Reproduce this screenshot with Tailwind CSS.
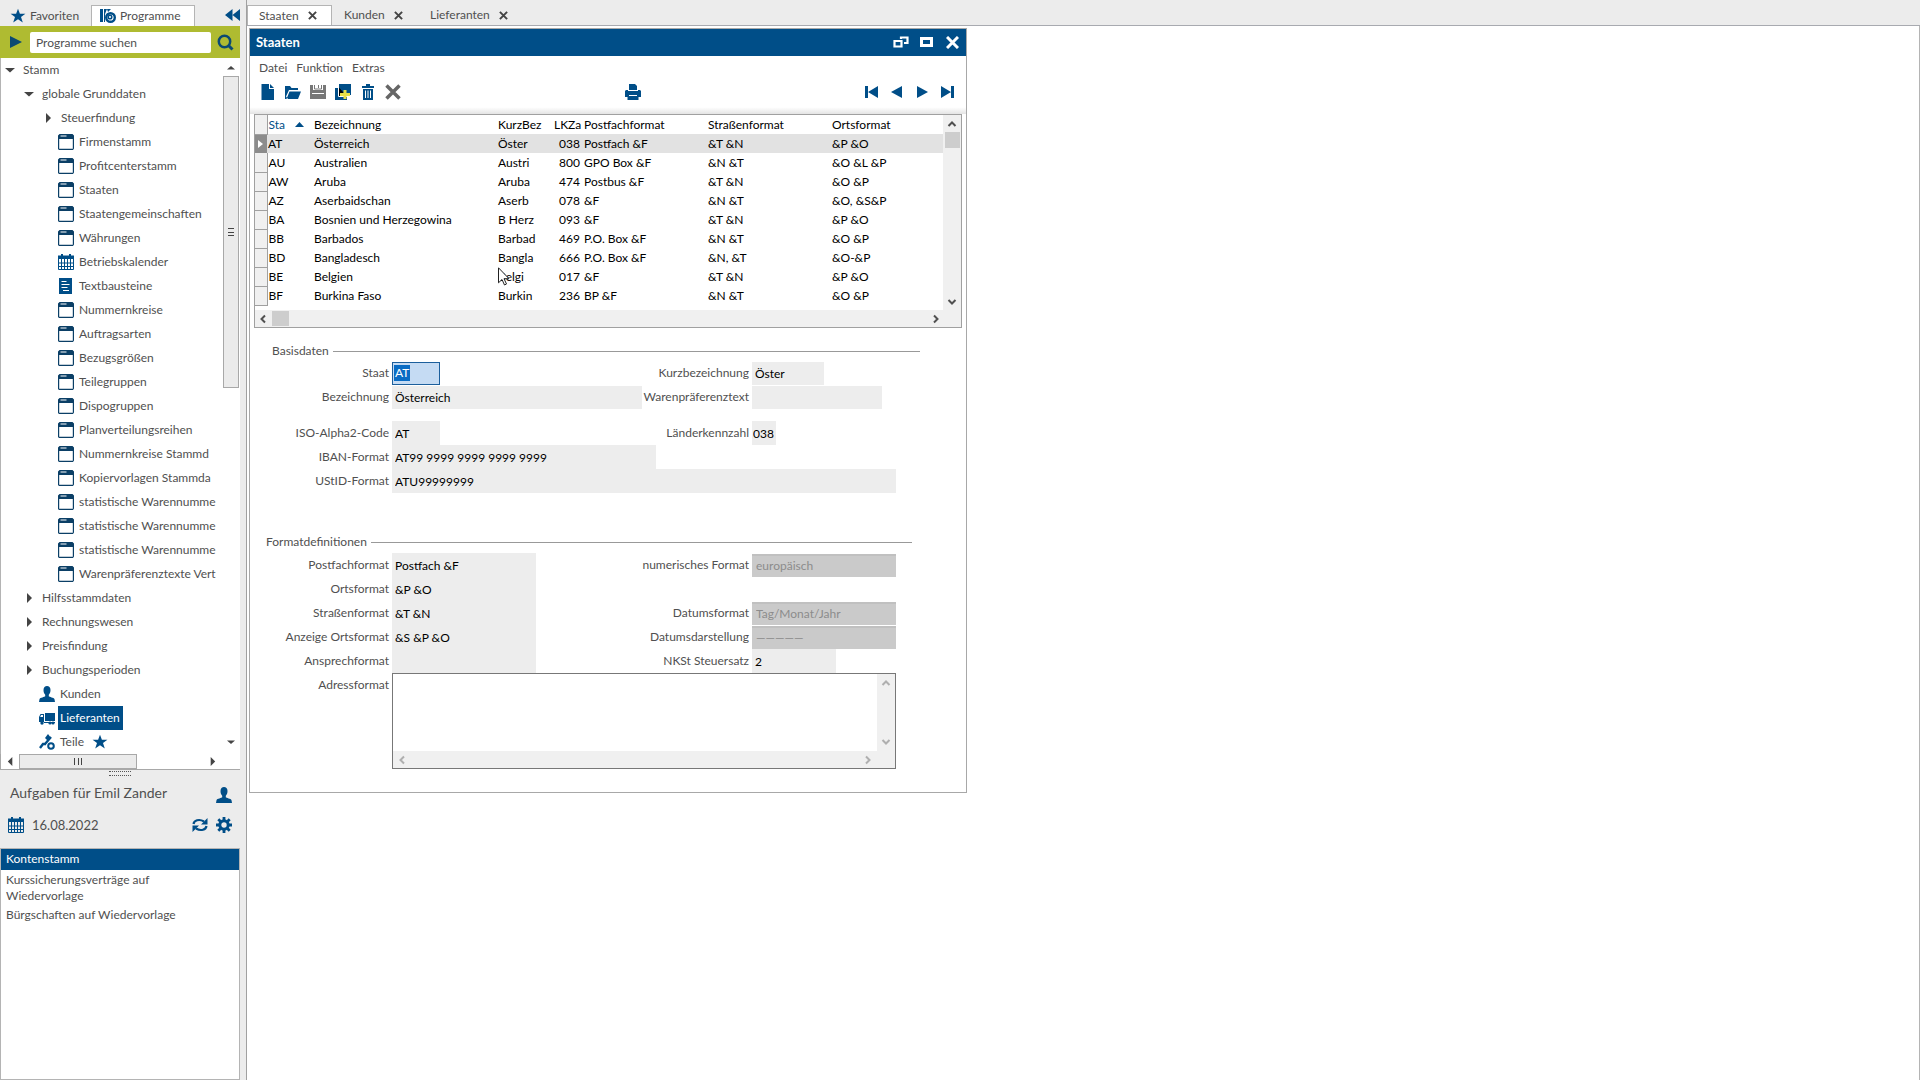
<!DOCTYPE html>
<html lang="de">
<head>
<meta charset="utf-8">
<title>Staaten</title>
<script src="https://cdn.jsdelivr.net/npm/@tailwindcss/browser@4"></script>
</head>
<body class="flex h-screen overflow-hidden bg-[#ececec] font-['Lato','Noto_Sans',sans-serif] text-[12px] leading-4 text-[#505050]">

<svg class="hidden" aria-hidden="true">
  <symbol id="star" viewBox="0 0 16 16"><path fill="#004e88" d="M8 .8l1.9 5h5.5l-4.4 3.2 1.8 5.6L8 11.2l-4.8 3.4L5 9 .6 5.8h5.5z"/></symbol>
  <symbol id="win" viewBox="0 0 16 16"><path fill="#0b3f66" fill-rule="evenodd" d="M1.500 0h13L16 1.500V14.500L15 16H1L0 15V1.500zM1.200 5v9.800h13.600V5zM2.500 1.500v1h6v-1z"/></symbol>
  <symbol id="cal" viewBox="0 0 16 16"><path fill="#004e88" d="M3 0h2v1.500h6V0h2v1.500h3v3.500H0V1.500h3z"/><path fill="none" stroke="#004e88" d="M.5 4v11.500h15V4M3.500 5v10M6.500 5v10M9.500 5v10M12.500 5v10M0 9h16M0 12.500h16"/></symbol>
  <symbol id="doc" viewBox="0 0 16 16"><path fill="#004e88" d="M1 0h13v16H1z"/><path stroke="#fff" d="M3.500 3.500h5M3.500 6.500h8M3.500 9.500h6M5 12.500h6"/></symbol>
  <symbol id="user" viewBox="0 0 16 16"><path fill="#004e88" d="M4.500 4C4.500 1.400 6 0 8 0s3.500 1.400 3.500 4c0 2.200-.6 3.700-1.700 4.700v1.500c.5 1 5 1 5.700 3L16 16H0l.5-2.800c.7-2 5.200-2 5.700-3V8.700C5.100 7.700 4.500 6.200 4.500 4z"/></symbol>
  <symbol id="truck" viewBox="0 0 16 16"><path fill="#004e88" d="M6 3h10v8H6zM0 7l1.500-3H5v8H0zM5 12h11v1H5z"/><path fill="#fff" d="M1.200 7l.8-2h2v2z"/><circle cx="3" cy="13" r="1.700" fill="#004e88"/><circle cx="11" cy="13" r="1.600" fill="#004e88"/><circle cx="14" cy="13" r="1.600" fill="#004e88"/></symbol>
  <symbol id="part" viewBox="0 0 16 16"><path fill="none" stroke="#004e88" stroke-width="2.400" d="M1 14l3-4h3M6 10l6-7"/><path fill="#004e88" d="M6 4l3-4 3 4-3 3z"/><circle cx="12" cy="12" r="2.800" fill="#fff" stroke="#004e88" stroke-width="2"/></symbol>
  <symbol id="down" viewBox="0 0 10 10"><path fill="#444" d="M0 3h10L5 7.500z"/></symbol>
  <symbol id="up" viewBox="0 0 10 10"><path fill="#444" d="M0 7h10L5 2.500z"/></symbol>
  <symbol id="right" viewBox="0 0 10 10"><path fill="#444" d="M3 0v10l5-5z"/></symbol>
  <symbol id="left" viewBox="0 0 10 10"><path fill="#444" d="M7 0v10L2 5z"/></symbol>
  <symbol id="close" viewBox="0 0 10 10"><path stroke="#444" stroke-width="2.200" d="M1 1l8 8M9 1L1 9"/></symbol>
  <symbol id="chev" viewBox="0 0 10 10"><path fill="none" stroke="#505050" stroke-width="2" d="M1.500 7L5 3.500 8.500 7"/></symbol>
</svg>

<aside class="flex w-60 shrink-0 flex-col">
  <nav class="flex h-[26px] items-end">
    <button class="flex h-[21px] w-[91px] items-center gap-1 pl-[10px]"><svg class="size-4"><use href="#star"/></svg>Favoriten</button>
    <button class="flex h-[21px] w-[104px] items-center gap-1 border border-b-0 border-[#b4b4b4] bg-white pl-2">
      <svg class="size-4" viewBox="0 0 16 16"><path fill="#004e88" d="M0 1h3v13H0zM4 1h3l-2 5v8H4zM7 1h4L8 4z"/><circle cx="10.500" cy="9.500" r="4.300" fill="#fff" stroke="#004e88" stroke-width="2.400"/><circle cx="10" cy="9" r="1.800" fill="none" stroke="#004e88" stroke-width="1.500"/></svg>Programme</button>
    <button class="ml-auto h-[22px]" aria-label="Einklappen"><svg class="h-3 w-[15px]" viewBox="0 0 15 12"><path fill="#004e88" d="M7.500 0v12L0 6zM15 0v12L7.500 6z"/></svg></button>
  </nav>
  <form class="flex h-8 items-center bg-[#afbb31]">
    <button type="button" class="w-[30px] pl-[10px]" aria-label="Start"><svg class="h-3 w-3" viewBox="0 0 12 12"><path fill="#0b4a72" d="M0 0v12l12-6z"/></svg></button>
    <input aria-label="Programme suchen" value="Programme suchen" class="h-[21px] min-w-0 flex-1 rounded-[2px] bg-white px-[6px]">
    <button type="button" class="w-[29px] pl-[6px]" aria-label="Suchen"><svg class="size-[17px]" viewBox="0 0 17 17"><circle cx="7.500" cy="7.500" r="5.700" fill="none" stroke="#0b4a72" stroke-width="2.500"/><path stroke="#0b4a72" stroke-width="3" d="M11.500 11.500l4 4"/></svg></button>
  </form>
  <div class="flex border-l border-[#b4b4b4] bg-white">
    <ul class="min-w-0 flex-1 overflow-hidden whitespace-nowrap *:flex *:h-6 *:items-center">
      <li class="gap-2 pl-1"><svg class="size-[10px]"><use href="#down"/></svg>Stamm</li>
      <li class="gap-2 pl-[23px]"><svg class="size-[10px]"><use href="#down"/></svg>globale Grunddaten</li>
      <li class="gap-2 pl-[42px]"><svg class="size-[10px]"><use href="#right"/></svg>Steuerfindung</li>
      <li class="gap-[5px] pl-[57px]"><svg class="size-4"><use href="#win"/></svg>Firmenstamm</li>
      <li class="gap-[5px] pl-[57px]"><svg class="size-4"><use href="#win"/></svg>Profitcenterstamm</li>
      <li class="gap-[5px] pl-[57px]"><svg class="size-4"><use href="#win"/></svg>Staaten</li>
      <li class="gap-[5px] pl-[57px]"><svg class="size-4"><use href="#win"/></svg>Staatengemeinschaften</li>
      <li class="gap-[5px] pl-[57px]"><svg class="size-4"><use href="#win"/></svg>Währungen</li>
      <li class="gap-[5px] pl-[57px]"><svg class="size-4"><use href="#cal"/></svg>Betriebskalender</li>
      <li class="gap-[5px] pl-[57px]"><svg class="size-4"><use href="#doc"/></svg>Textbausteine</li>
      <li class="gap-[5px] pl-[57px]"><svg class="size-4"><use href="#win"/></svg>Nummernkreise</li>
      <li class="gap-[5px] pl-[57px]"><svg class="size-4"><use href="#win"/></svg>Auftragsarten</li>
      <li class="gap-[5px] pl-[57px]"><svg class="size-4"><use href="#win"/></svg>Bezugsgrößen</li>
      <li class="gap-[5px] pl-[57px]"><svg class="size-4"><use href="#win"/></svg>Teilegruppen</li>
      <li class="gap-[5px] pl-[57px]"><svg class="size-4"><use href="#win"/></svg>Dispogruppen</li>
      <li class="gap-[5px] pl-[57px]"><svg class="size-4"><use href="#win"/></svg>Planverteilungsreihen</li>
      <li class="gap-[5px] pl-[57px]"><svg class="size-4 shrink-0"><use href="#win"/></svg>Nummernkreise Stammd</li>
      <li class="gap-[5px] pl-[57px]"><svg class="size-4 shrink-0"><use href="#win"/></svg>Kopiervorlagen Stammda</li>
      <li class="gap-[5px] pl-[57px]"><svg class="size-4 shrink-0"><use href="#win"/></svg>statistische Warennumme</li>
      <li class="gap-[5px] pl-[57px]"><svg class="size-4 shrink-0"><use href="#win"/></svg>statistische Warennumme</li>
      <li class="gap-[5px] pl-[57px]"><svg class="size-4 shrink-0"><use href="#win"/></svg>statistische Warennumme</li>
      <li class="gap-[5px] pl-[57px]"><svg class="size-4 shrink-0"><use href="#win"/></svg>Warenpräferenztexte Vert</li>
      <li class="gap-2 pl-[23px]"><svg class="size-[10px]"><use href="#right"/></svg>Hilfsstammdaten</li>
      <li class="gap-2 pl-[23px]"><svg class="size-[10px]"><use href="#right"/></svg>Rechnungswesen</li>
      <li class="gap-2 pl-[23px]"><svg class="size-[10px]"><use href="#right"/></svg>Preisfindung</li>
      <li class="gap-2 pl-[23px]"><svg class="size-[10px]"><use href="#right"/></svg>Buchungsperioden</li>
      <li class="gap-[5px] pl-[38px]"><svg class="size-4"><use href="#user"/></svg>Kunden</li>
      <li class="gap-[3px] pl-[38px]"><svg class="size-4"><use href="#truck"/></svg><span class="flex h-6 items-center bg-[#004e88] pr-[3px] pl-[2px] text-white">Lieferanten</span></li>
      <li class="gap-[5px] pl-[38px]"><svg class="size-4"><use href="#part"/></svg>Teile<svg class="ml-[3px] size-4"><use href="#star"/></svg></li>
    </ul>
    <div class="flex w-[18px] flex-col items-center pt-[6px]">
      <svg class="size-2"><use href="#up"/></svg>
      <div class="mt-1 flex h-[312px] w-4 items-center justify-center border border-[#a8a8a8] bg-[#ebebeb]"><span class="flex h-2 w-[6px] flex-col justify-between *:h-px *:bg-[#444]"><i></i><i></i><i></i></span></div>
      <svg class="mt-auto mb-2 size-2"><use href="#down"/></svg>
    </div>
  </div>
  <div class="flex h-4 items-center border-b border-l border-[#a8a8a8] bg-white pl-[5px]">
    <svg class="size-[9px]"><use href="#left"/></svg>
    <div class="ml-1 flex h-[15px] w-[118px] items-center justify-center border border-[#a8a8a8] bg-[#ebebeb]"><span class="flex h-[7px] w-2 justify-between *:w-px *:bg-[#444]"><i></i><i></i><i></i></span></div>
    <svg class="mr-[23px] ml-auto size-[9px]"><use href="#right"/></svg>
  </div>
  <div class="h-[7px] pt-px"><div class="mx-auto h-[5px] w-[22px] border-y border-dotted border-[#555]"></div></div>
  <section class="flex h-[71px] flex-col gap-[14px] pr-2 pl-2">
    <div class="flex items-center justify-between pt-[6px] pl-[2px] text-[14px]"><h2>Aufgaben für Emil Zander</h2><button aria-label="Benutzer"><svg class="mt-1 size-4"><use href="#user"/></svg></button></div>
    <div class="flex items-center text-[13px]"><svg class="mr-2 size-4"><use href="#cal"/></svg>16.08.2022
      <button class="ml-auto" aria-label="Aktualisieren"><svg class="size-4" viewBox="0 0 16 16"><path fill="none" stroke="#004e88" stroke-width="2.200" d="M1.500 7C2 3.500 7 1.500 12 4.500M14.500 9C14 12.500 9 14.500 4 11.500"/><path fill="#004e88" d="M15.500 1v6.500H9zM.5 15V8.500H7z"/></svg></button>
      <button class="ml-2" aria-label="Einstellungen"><svg class="size-4" viewBox="0 0 16 16"><circle cx="8" cy="8" r="4.200" fill="none" stroke="#004e88" stroke-width="3"/><path stroke="#004e88" stroke-width="2.800" d="M8 0v3M8 13v3M0 8h3M13 8h3M2.300 2.300l2.200 2.200M11.500 11.500l2.200 2.200M2.300 13.700l2.200-2.200M11.500 4.500l2.200-2.200"/></svg></button>
    </div>
  </section>
  <ul class="flex-1 border border-[#b4b4b4] bg-white">
    <li class="bg-[#004e88] px-[5px] pt-[2px] pb-[3px] text-white">Kontenstamm</li>
    <li class="w-[180px] px-[5px] pt-[2px]">Kurssicherungsverträge auf Wiedervorlage</li>
    <li class="px-[5px] pt-[3px]">Bürgschaften auf Wiedervorlage</li>
  </ul>
</aside>

<div class="w-[7px] shrink-0 border-r border-[#a0a0a0]"></div>

<main class="flex min-w-0 flex-1 flex-col">
  <nav class="flex h-[26px] items-end border-b border-[#a8aab0]">
    <div class="flex h-5 w-[85px] items-center gap-[9px] border border-b-0 border-[#b4b4b4] bg-white pl-[11px]"><a href="#">Staaten</a><button aria-label="Staaten schließen"><svg class="block size-[9px]"><use href="#close"/></svg></button></div>
    <div class="flex h-5 w-[86px] items-center gap-[9px] pl-3"><a href="#">Kunden</a><button aria-label="Kunden schließen"><svg class="block size-[9px]"><use href="#close"/></svg></button></div>
    <div class="flex h-5 items-center gap-[9px] pl-3"><a href="#">Lieferanten</a><button aria-label="Lieferanten schließen"><svg class="block size-[9px]"><use href="#close"/></svg></button></div>
  </nav>
  <div class="relative min-h-0 flex-1 border-r border-[#b4b4b4] bg-white pt-[2px] pl-[2px]">
    <section class="w-[718px] max-w-full border border-[#a8a8a8] bg-white pb-[23px]">
      <header class="flex h-[27px] items-center bg-[#004e88] pr-[7px] pb-px pl-[6px] text-white">
        <h1 class="text-[13px] font-bold">Staaten</h1>
        <button class="ml-auto" aria-label="Wiederherstellen"><svg class="h-3 w-4" viewBox="0 0 16 12"><path fill="none" stroke="#fff" stroke-width="2.200" d="M1.500 5h7v5.500h-7zM8 3V1.500h6.500V7H11"/></svg></button>
        <button class="ml-[11px]" aria-label="Maximieren"><svg class="h-3 w-[13px]" viewBox="0 0 13 12"><path fill="none" stroke="#fff" stroke-width="3" d="M1.500 2.500h10v7h-10z"/></svg></button>
        <button class="ml-[13px]" aria-label="Schließen"><svg class="size-[13px]" viewBox="0 0 13 13"><path stroke="#fff" stroke-width="3" d="M1 1l11 11M12 1L1 12"/></svg></button>
      </header>
      <nav class="flex h-6 items-center gap-[9px] pl-[9px]"><button>Datei</button><button>Funktion</button><button>Extras</button></nav>
      <div class="flex h-[34px] items-start gap-[9px] bg-linear-to-b from-white from-80% to-[#e4e4e4] pt-1 pr-[11px] pl-[10px]">
        <button aria-label="Neu"><svg class="size-4" viewBox="0 0 16 16"><path fill="#004e88" d="M1.500 0H9v5h5v11H1.500zM10 0l4 4h-4z"/></svg></button>
        <button aria-label="Öffnen"><svg class="size-4" viewBox="0 0 16 16"><path fill="#004e88" d="M0 2h5l1.500 2H13v2H4l-3 6.500L3 15h10l3-7.500H4.500L1.500 15H0z"/></svg></button>
        <button aria-label="Speichern"><svg class="size-4" viewBox="0 0 16 16"><path fill="#777" d="M0 1h3v5h10V1h3v14H0z"/><path fill="none" stroke="#777" d="M4.500 1v4h7V1M8.500 1v3"/><path stroke="#fff" d="M2 9.500h12"/></svg></button>
        <button aria-label="Kopieren"><svg class="size-4" viewBox="0 0 16 16"><path fill="#004e88" d="M4 0h12v11H4zM0 4h3v8h9v4H0z"/><path stroke="#fff" d="M3.500 3v9.500H12"/><path fill="#e6e04a" d="M8.500 6h3v3H15v3h-3.500v3h-3v-3H5V9h3.500z"/></svg></button>
        <button aria-label="Löschen"><svg class="size-4" viewBox="0 0 16 16"><path fill="#004e88" d="M2 2h4V0h4v2h4v2H2zM3 5h10v11H3z"/><path stroke="#fff" d="M5.500 6.500V14M8 6.500V14M10.500 6.500V14"/></svg></button>
        <button aria-label="Abbrechen"><svg class="size-4" viewBox="0 0 16 16"><path stroke="#666" stroke-width="3.500" d="M1.500 1.500l13 13M14.500 1.500l-13 13"/></svg></button>
        <button class="mx-auto" aria-label="Drucken"><svg class="size-4" viewBox="0 0 16 16"><path fill="#004e88" d="M4 0h6l2 2v4H4zM1 6h14l1 1v6h-2.500v3h-11v-3H0V7z"/><path stroke="#fff" d="M3 6.500h10M4 11.500h8"/></svg></button>
        <button aria-label="Erster"><svg class="size-4" viewBox="0 0 16 16"><path fill="#004e88" d="M1 2h3v12H1zM14 2v12L4 8z"/></svg></button>
        <button aria-label="Vorheriger"><svg class="size-4" viewBox="0 0 16 16"><path fill="#004e88" d="M13 2v12L2 8z"/></svg></button>
        <button aria-label="Nächster"><svg class="size-4" viewBox="0 0 16 16"><path fill="#004e88" d="M3 2v12l11-6z"/></svg></button>
        <button aria-label="Letzter"><svg class="size-4" viewBox="0 0 16 16"><path fill="#004e88" d="M12 2h3v12h-3zM2 2v12l10-6z"/></svg></button>
      </div>

      <div class="relative mr-1 ml-1 border border-[#a0a0a0] text-black">
        <div class="flex h-[195px] items-start">
          <table class="w-full table-fixed border-collapse text-left whitespace-nowrap [&_td]:p-0 [&_th]:p-0 [&_th]:font-normal [&_tr]:h-[19px]">
            <colgroup><col class="w-[12px]"><col class="w-[47px]"><col class="w-[184px]"><col class="w-[56px]"><col class="w-[26px]"><col class="w-[4px]"><col class="w-[124px]"><col class="w-[124px]"><col></colgroup>
            <thead><tr><th class="border-r border-b border-[#a0a0a0] bg-[#f0f0f0]"></th><th class="text-[#004e88]"><div class="flex items-center gap-[10px] pl-px">Sta<svg class="h-[5px] w-[9px]" viewBox="0 0 9 5"><path fill="#004e88" d="M0 5h9L4.500 0z"/></svg></div></th><th>Bezeichnung</th><th>KurzBez</th><th>LKZa</th><th></th><th>Postfachformat</th><th>Straßenformat</th><th>Ortsformat</th></tr></thead>
            <tbody id="rows"></tbody>
          </table>
          <div class="flex w-[18px] shrink-0 flex-col items-center self-stretch bg-[#f0f0f0] pt-1"><svg class="size-[10px]"><use href="#chev"/></svg><div class="mt-[3px] h-4 w-[15px] bg-[#cdcdcd]"></div><svg class="mt-auto mb-[3px] size-[10px] rotate-180"><use href="#chev"/></svg></div>
        </div>
        <div class="flex h-[17px] items-center bg-[#f0f0f0] pr-5 pl-[3px]"><svg class="size-[10px] -rotate-90"><use href="#chev"/></svg><div class="ml-1 h-[15px] w-[17px] bg-[#cdcdcd]"></div><svg class="ml-auto size-[10px] rotate-90"><use href="#chev"/></svg></div>
        <svg class="absolute top-[152px] left-[243px] h-[19px] w-3" viewBox="0 0 12 19"><path fill="#fff" stroke="#222" d="M.5.800v15l3.500-3.300 2.500 5.500 2-1-2.500-5.300h5z"/></svg>
      </div>

      <form class="pr-[46px] pl-[6px] text-black [&_label]:text-right [&_label]:whitespace-nowrap [&_label]:text-[#505050]">
        <fieldset class="pt-[15px]">
          <div class="flex h-4 items-center gap-1 pl-4 text-[#505050]"><legend>Basisdaten</legend><span class="h-px flex-1 bg-[#999]"></span></div>
          <div class="mt-[2px] grid auto-rows-[24px] grid-cols-[133px_246px_108px_1fr] items-center gap-x-[3px] [&_input]:h-[23px] [&_input]:bg-[#ededed] [&_input]:px-[3px]">
            <label for="st">Staat</label>
            <div class="relative h-[23px] w-12"><input id="st" class="w-12 border border-[#1c5f9c] bg-[#c5dbf3]! px-[2px]! text-white" value="AT"><span class="absolute top-[3px] left-[2px] h-4 bg-[#0a6cc4] px-px text-white">AT</span></div>
            <label for="kb">Kurzbezeichnung</label><input id="kb" class="w-[72px]" value="Öster">
            <label for="bz">Bezeichnung</label><input id="bz" class="w-[250px]" value="Österreich">
            <label for="wp">Warenpräferenztext</label><input id="wp" class="w-[130px]">
          </div>
          <div class="mt-3 grid auto-rows-[24px] grid-cols-[133px_246px_108px_1fr] items-center gap-x-[3px] [&_input]:h-6 [&_input]:bg-[#ededed] [&_input]:px-[3px]">
            <label for="iso">ISO-Alpha2-Code</label><input id="iso" class="w-12" value="AT">
            <label for="lk">Länderkennzahl</label><input id="lk" class="w-6 px-px!" value="038">
            <label for="ib">IBAN-Format</label><input id="ib" class="col-span-3 w-[264px]" value="AT99 9999 9999 9999 9999">
            <label for="us">UStID-Format</label><input id="us" class="col-span-3 w-[504px]" value="ATU99999999">
          </div>
        </fieldset>
        <fieldset class="pt-[41px]">
          <div class="mr-2 flex h-4 items-center gap-1 pl-[10px] text-[#505050]"><legend>Formatdefinitionen</legend><span class="h-px flex-1 bg-[#999]"></span></div>
          <div class="mt-[3px] grid auto-rows-[24px] grid-cols-[133px_246px_108px_1fr] items-center gap-x-[3px] [&_input]:h-6 [&_input]:bg-[#ededed] [&_input]:px-[3px] [&_select]:h-[23px] [&_select]:w-36 [&_select]:appearance-none [&_select]:border-t-2 [&_select]:border-[#c0c0c0] [&_select]:bg-[#cacaca] [&_select]:px-1 [&_select]:pb-px [&_select]:text-[#8c8c8c]">
            <label for="pf">Postfachformat</label><input id="pf" class="w-36" value="Postfach &amp;F">
            <label for="nf">numerisches Format</label><select id="nf" class="opacity-100" disabled><option>europäisch</option></select>
            <label for="of">Ortsformat</label><input id="of" class="col-span-3 w-36" value="&amp;P &amp;O">
            <label for="sf">Straßenformat</label><input id="sf" class="w-36" value="&amp;T &amp;N">
            <label for="df">Datumsformat</label><select id="df" class="opacity-100" disabled><option>Tag/Monat/Jahr</option></select>
            <label for="ao">Anzeige Ortsformat</label><input id="ao" class="w-36" value="&amp;S &amp;P &amp;O">
            <label for="dd">Datumsdarstellung</label><select id="dd" class="opacity-100" disabled><option>—————</option></select>
            <label for="an">Ansprechformat</label><input id="an" class="w-36">
            <label for="nk">NKSt Steuersatz</label><input id="nk" class="w-[84px]" value="2">
          </div>
          <div class="flex gap-[3px]">
            <label for="ad" class="w-[133px] pt-1">Adressformat</label>
            <div class="grid h-24 w-[504px] grid-cols-[1fr_18px] grid-rows-[1fr_17px] border border-[#777] bg-[#f0f0f0]">
              <textarea id="ad" class="resize-none bg-white"></textarea>
              <div class="flex flex-col items-center justify-between py-1 opacity-40"><svg class="size-[10px]"><use href="#chev"/></svg><svg class="size-[10px] rotate-180"><use href="#chev"/></svg></div>
              <div class="flex items-center justify-between px-1 opacity-40"><svg class="size-[10px] -rotate-90"><use href="#chev"/></svg><svg class="size-[10px] rotate-90"><use href="#chev"/></svg></div>
            </div>
          </div>
        </fieldset>
      </form>
    </section>
  </div>
</main>

<script>
const data = [
  ['AT','Österreich','Öster','038','Postfach &F','&T &N','&P &O'],
  ['AU','Australien','Austri','800','GPO Box &F','&N &T','&O &L &P'],
  ['AW','Aruba','Aruba','474','Postbus &F','&T &N','&O &P'],
  ['AZ','Aserbaidschan','Aserb','078','&F','&N &T','&O, &S&P'],
  ['BA','Bosnien und Herzegowina','B Herz','093','&F','&T &N','&P &O'],
  ['BB','Barbados','Barbad','469','P.O. Box &F','&N &T','&O &P'],
  ['BD','Bangladesch','Bangla','666','P.O. Box &F','&N, &T','&O-&P'],
  ['BE','Belgien','Belgi','017','&F','&T &N','&P &O'],
  ['BF','Burkina Faso','Burkin','236','BP &F','&N &T','&O &P'],
];
const body = document.getElementById('rows');
data.forEach((r, i) => {
  const tr = body.insertRow();
  if (i === 0) tr.className = 'bg-[#e2e2e2]';
  const mark = tr.insertCell();
  mark.className = i === 0 ? 'bg-[#8c8c8c] text-white' : 'border-r border-b border-[#a0a0a0] bg-[#f0f0f0]';
  if (i === 0) mark.innerHTML = '<svg class="ml-[3px] block h-2 w-[5px]" viewBox="0 0 5 8"><path fill="#fff" d="M0 0v8l5-4z"/></svg>';
  r.forEach((v, k) => {
    const td = tr.insertCell();
    td.textContent = v;
    if (k === 0) td.className = 'pl-px!';
    if (k === 3) { td.className = 'text-right'; tr.insertCell(); }
  });
});
</script>
</body>
</html>
